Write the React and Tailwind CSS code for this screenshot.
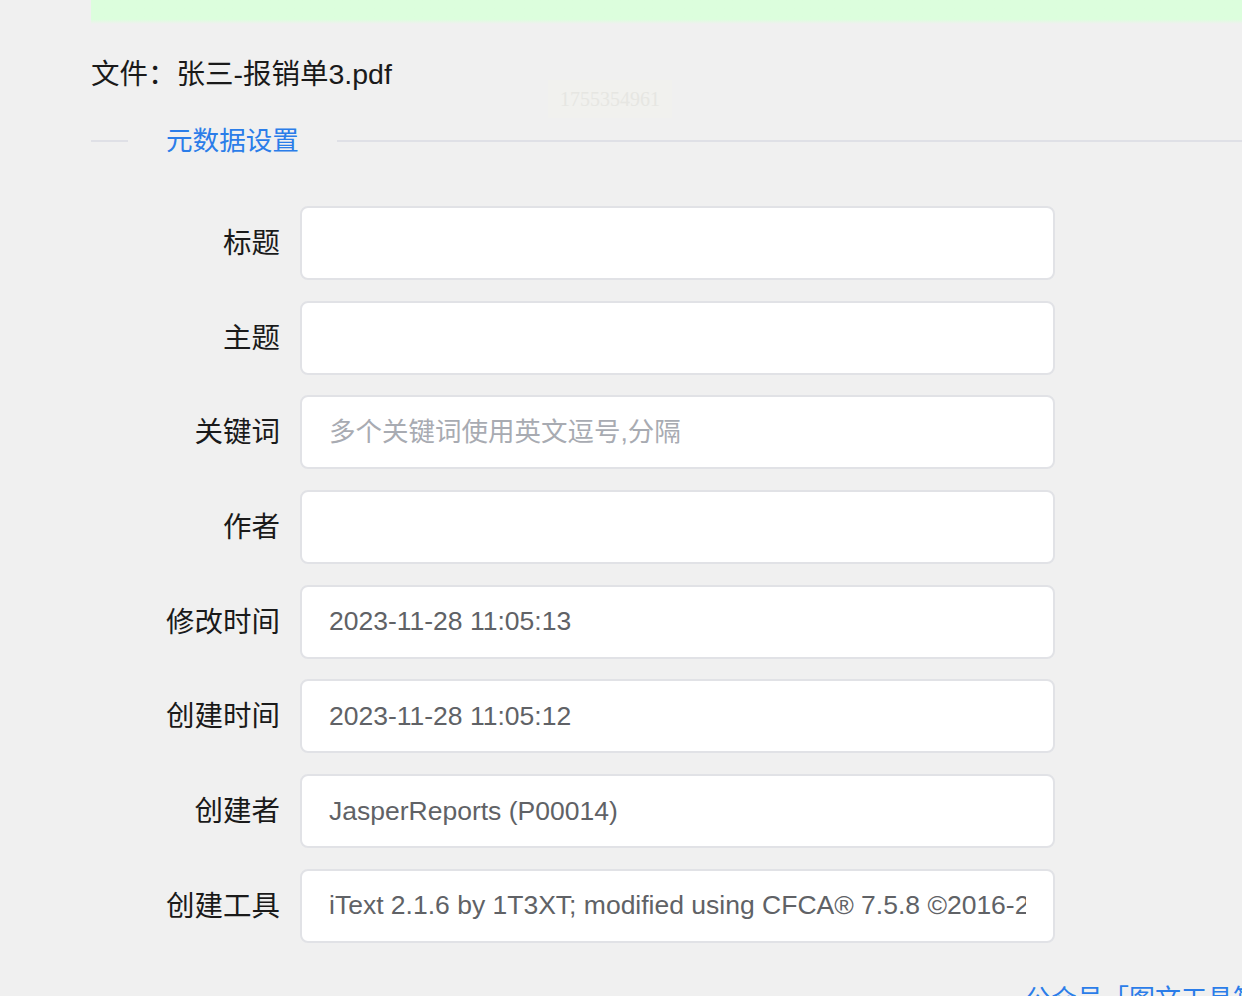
const FONT = '"Liberation Sans", "Noto Sans CJK SC", Arial, sans-serif';

const fields = [
  { label: "标题", value: "" },
  { label: "主题", value: "" },
  { label: "关键词", value: "", placeholder: "多个关键词使用英文逗号,分隔" },
  { label: "作者", value: "" },
  { label: "修改时间", value: "2023-11-28 11:05:13" },
  { label: "创建时间", value: "2023-11-28 11:05:12" },
  { label: "创建者", value: "JasperReports (P00014)" },
  { label: "创建工具", value: "iText 2.1.6 by 1T3XT; modified using CFCA® 7.5.8 ©2016-2023 CFCA" },
];

function FormRow({ label, value, placeholder }) {
  return (
    <div className="flex items-center">
      <label className="w-[209px] shrink-0 pr-[20px] text-right text-[28.5px] leading-[40px] text-[#1a1a1a]">
        {label}
      </label>
      <input
        readOnly
        value={value}
        placeholder={placeholder}
        className="h-[74px] w-[755px] rounded-[8px] border-2 border-[#e1e2e6] bg-white px-[27px] text-[26.5px] text-[#606266] outline-none placeholder:text-[#a8abb2]"
        style={{ fontFamily: FONT }}
      />
    </div>
  );
}

export default function App() {
  return (
    <div
      className="relative h-[996px] w-full overflow-hidden bg-[#f0f0f0]"
      style={{ fontFamily: FONT }}
    >
      {/* top notice strip */}
      <div className="ml-[91px] h-[24px] bg-gradient-to-b from-[#dcfedd] from-80% to-[#f0f0f0]" />

      <div className="pl-[91px]">
        <div className="mt-[30px] text-[28.5px] leading-[40px] text-[#1a1a1a]">
          文件：张三-报销单3.pdf
        </div>

        {/* divider */}
        <div className="mt-[29px] flex items-center">
          <div className="h-[2px] w-[37px] bg-[#dfe0e6]" />
          <span className="px-[38px] text-[26.6px] leading-[36px] text-[#2b7de9]">元数据设置</span>
          <div className="h-[2px] flex-1 bg-[#dfe0e6]" />
        </div>

        <div className="mt-[47px] flex flex-col gap-y-[20.7px]">
          {fields.map((f) => (
            <FormRow key={f.label} {...f} />
          ))}
        </div>

        <div className="ml-[934px] mt-[38px] whitespace-nowrap text-[26px] leading-[36px] text-[#2b7de9]">
          公众号「图文工具箱」
        </div>
      </div>

      {/* watermark */}
      <div
        className="absolute left-[548px] top-[80px] bg-[#f1f1ee] px-[12px] py-[4px] text-[20px] text-[#e6e6e2]"
        style={{ fontFamily: '"Liberation Serif", serif' }}
      >
        1755354961
      </div>
    </div>
  );
}
